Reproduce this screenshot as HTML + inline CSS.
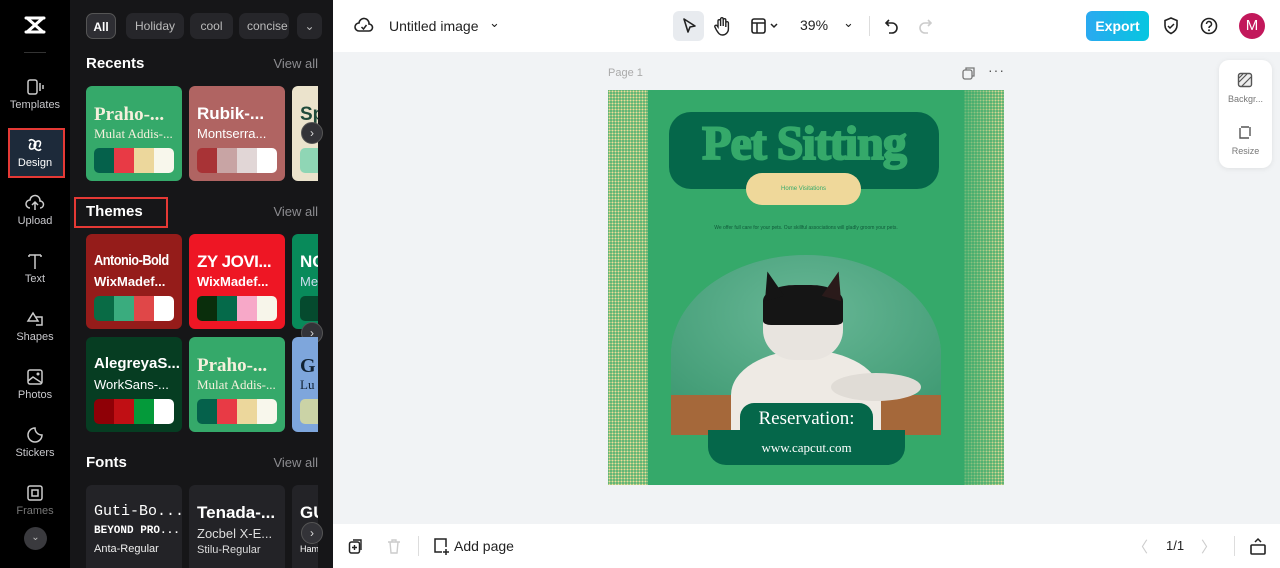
<!DOCTYPE html>
<html><head><meta charset="utf-8"><style>
*{margin:0;padding:0;box-sizing:border-box}
body{width:1280px;height:568px;overflow:hidden;font-family:"Liberation Sans",sans-serif;background:#000;position:relative}
.abs{position:absolute}
.rail{left:0;top:0;width:70px;height:568px;background:#000}
.ri{position:absolute;left:0;width:70px;text-align:center;color:#c8c8cc;font-size:11px}
.ri svg{display:block;margin:0 auto 3px}
.panel{left:70px;top:0;width:263px;height:568px;background:#161618;overflow:hidden}
.chip{position:absolute;top:13px;height:26px;border-radius:7px;background:#26262a;color:#bbb;font-size:12px;line-height:26px;text-align:center;overflow:hidden}
.h{position:absolute;left:16px;color:#fff;font-weight:bold;font-size:15px}
.va{position:absolute;right:15px;color:#8c8c90;font-size:13px}
.card{position:absolute;width:96px;height:95px;border-radius:6px;overflow:hidden}
.card.p{width:26px;border-radius:6px 0 0 6px}
.card .t{position:absolute;left:8px;top:18px;font-weight:bold;font-size:17px;white-space:nowrap}
.card .s{position:absolute;left:8px;top:40px;font-size:13px;white-space:nowrap}
.pal{position:absolute;left:8px;top:62px;width:80px;height:25px;border-radius:5px;overflow:hidden;display:flex}
.pal i{flex:1}
.nx{position:absolute;width:22px;height:22px;border-radius:50%;background:#333338;border:1px solid #555;color:#ddd;font-size:12px;line-height:20px;text-align:center}
.main{left:333px;top:0;width:947px;height:568px;background:#f1f3f5}
.top{left:0;top:0;width:947px;height:52px;background:#fff}
.bot{left:0;top:524px;width:947px;height:44px;background:#fff}
.ic{position:absolute}
.dots{position:absolute;top:0;width:40px;height:395px;background-image:radial-gradient(circle,#f0dc98 0 1.1px,transparent 1.3px);background-size:3px 3px}
</style></head><body>
<div class="abs rail">
 <div class="ri" style="top:14px"><svg width="26" height="22" viewBox="0 0 26 22"><path d="M4 4h18M4 18h18M5 4 L21 18 M21 4 L5 18" stroke="#fff" stroke-width="3" fill="none" stroke-linecap="round"/></svg></div>
 <div class="abs" style="left:24px;top:52px;width:22px;height:1px;background:#333"></div>
 <div class="ri" style="top:78px"><svg width="20" height="18"><rect x="3" y="2" width="9" height="14" rx="2" fill="none" stroke="#ccc" stroke-width="1.5"/><path d="M15 5v8M18 7v4" stroke="#ccc" stroke-width="1.5"/></svg>Templates</div>
 <div class="abs" style="left:8px;top:128px;width:57px;height:50px;border:2px solid #e53935;background:#1d2a3a"></div>
 <div class="ri" style="top:136px;color:#fff"><svg width="20" height="18"><path d="M4 5c3-4 9 2 6 6s-8 2-4-4M16 13c-3 4-9-2-6-6s8-2 4 4" stroke="#fff" stroke-width="1.6" fill="none"/></svg>Design</div>
 <div class="ri" style="top:194px"><svg width="20" height="18"><path d="M5 14a4 4 0 0 1 0-8 5 5 0 0 1 10 1 3.5 3.5 0 0 1 0 7M10 9v7M7 11l3-3 3 3" stroke="#ccc" stroke-width="1.5" fill="none"/></svg>Upload</div>
 <div class="ri" style="top:252px"><svg width="20" height="18"><path d="M4 3h12M10 3v14M4 3v2M16 3v2" stroke="#ccc" stroke-width="1.5" fill="none"/></svg>Text</div>
 <div class="ri" style="top:310px"><svg width="20" height="18"><path d="M8 3l5 8H3zM11 7h6v8h-6" stroke="#ccc" stroke-width="1.5" fill="none"/></svg>Shapes</div>
 <div class="ri" style="top:368px"><svg width="20" height="18"><rect x="3" y="2" width="14" height="14" rx="2" fill="none" stroke="#ccc" stroke-width="1.5"/><path d="M3 13l5-4 9 6" stroke="#ccc" stroke-width="1.5" fill="none"/><circle cx="13" cy="6" r="1.5" fill="#ccc"/></svg>Photos</div>
 <div class="ri" style="top:426px"><svg width="20" height="18"><path d="M17 9a7 7 0 1 1-7-7c0 4 3 7 7 7z" stroke="#ccc" stroke-width="1.5" fill="none"/></svg>Stickers</div>
 <div class="ri" style="top:484px;color:#777"><svg width="20" height="18"><rect x="3" y="2" width="14" height="14" rx="2" fill="none" stroke="#ccc" stroke-width="1.5"/><rect x="7" y="6" width="6" height="6" fill="none" stroke="#ccc" stroke-width="1.5"/></svg>Frames</div>
 <div class="abs" style="left:24px;top:527px;width:23px;height:23px;border-radius:50%;background:#3a3a3e;color:#bbb;font-size:10px;text-align:center;line-height:22px">⌄</div>
</div>
<div class="abs panel">
 <div class="chip" style="left:16px;width:30px;background:#2e2e33;border:1px solid #555;color:#fff;font-weight:bold">All</div>
 <div class="chip" style="left:56px;width:58px">Holiday</div>
 <div class="chip" style="left:120px;width:43px">cool</div>
 <div class="chip" style="left:169px;width:50px;text-align:left;padding-left:8px">concise</div>
 <div class="chip" style="left:227px;width:25px">⌄</div>
 <div class="h" style="top:55px">Recents</div><div class="va" style="top:56px">View all</div>
 <div class="card" style="left:16px;top:86px;background:#35a96a"><div class="t" style="color:#f5f0dc;font-family:'Liberation Serif',serif;font-size:19px">Praho-...</div><div class="s" style="color:#f5f0dc;font-family:'Liberation Serif',serif">Mulat Addis-...</div><div class="pal"><i style="background:#05614b"></i><i style="background:#e83a45"></i><i style="background:#ecd79c"></i><i style="background:#f8f7ec"></i></div></div>
 <div class="card" style="left:119px;top:86px;background:#b06462"><div class="t" style="color:#fff">Rubik-...</div><div class="s" style="color:#fff">Montserra...</div><div class="pal"><i style="background:#a83336"></i><i style="background:#c8a4a4"></i><i style="background:#e1d6d6"></i><i style="background:#fff"></i></div></div>
 <div class="card p" style="left:222px;top:86px;background:#ebe3cc"><div class="t" style="color:#1e4a3a;font-size:19px">Sp</div><div class="pal"><i style="background:#8fd6b5"></i></div></div>
 <div class="nx" style="left:231px;top:122px">›</div>
 <div class="abs" style="left:4px;top:197px;width:94px;height:31px;border:2px solid #e53935"></div>
 <div class="h" style="top:203px">Themes</div><div class="va" style="top:204px">View all</div>
 <div class="card" style="left:16px;top:234px;background:#951c1a"><div class="t" style="color:#fff;font-size:15px;letter-spacing:-.6px;transform:scaleX(.85);transform-origin:left">Antonio-Bold</div><div class="s" style="color:#fff;font-weight:bold">WixMadef...</div><div class="pal"><i style="background:#096b45"></i><i style="background:#3aac7e"></i><i style="background:#e04748"></i><i style="background:#fff"></i></div></div>
 <div class="card" style="left:119px;top:234px;background:#ee1624"><div class="t" style="color:#fff;font-size:17px;letter-spacing:-.5px">ZY JOVI...</div><div class="s" style="color:#fff;font-weight:bold">WixMadef...</div><div class="pal"><i style="background:#0a2e0c"></i><i style="background:#056a4a"></i><i style="background:#f7a8c8"></i><i style="background:#f7f5ea"></i></div></div>
 <div class="card p" style="left:222px;top:234px;background:#088a5a"><div class="t" style="color:#fff">NC</div><div class="s" style="color:#cde">Me</div><div class="pal"><i style="background:#054a2e"></i></div></div>
 <div class="nx" style="left:231px;top:322px">›</div>
 <div class="card" style="left:16px;top:337px;background:#063d22"><div class="t" style="color:#fff;font-size:15px">AlegreyaS...</div><div class="s" style="color:#fff">WorkSans-...</div><div class="pal"><i style="background:#8f0006"></i><i style="background:#c00f14"></i><i style="background:#049a3a"></i><i style="background:#fff"></i></div></div>
 <div class="card" style="left:119px;top:337px;background:#35a96a"><div class="t" style="color:#f5f0dc;font-family:'Liberation Serif',serif;font-size:19px">Praho-...</div><div class="s" style="color:#f5f0dc;font-family:'Liberation Serif',serif">Mulat Addis-...</div><div class="pal"><i style="background:#05614b"></i><i style="background:#e83a45"></i><i style="background:#ecd79c"></i><i style="background:#f8f7ec"></i></div></div>
 <div class="card p" style="left:222px;top:337px;background:#7ea6dc"><div class="t" style="color:#123;font-family:'Liberation Serif',serif;font-size:20px">G</div><div class="s" style="color:#123;font-family:'Liberation Serif',serif">Lu</div><div class="pal"><i style="background:#cbd3a6"></i></div></div>
 <div class="h" style="top:454px">Fonts</div><div class="va" style="top:455px">View all</div>
 <div class="card" style="left:16px;top:485px;height:90px;background:#232327"><div class="t" style="color:#fff;font-family:'Liberation Mono',monospace;font-size:15px;font-weight:normal">Guti-Bo...</div><div class="s" style="top:40px;color:#fff;font-family:'Liberation Mono',monospace;font-weight:bold;font-size:11px">BEYOND PRO...</div><div class="s" style="top:58px;color:#eee;font-size:11px">Anta-Regular</div></div>
 <div class="card" style="left:119px;top:485px;height:90px;background:#232327"><div class="t" style="color:#fff;font-size:17px">Tenada-...</div><div class="s" style="top:41px;color:#ddd">Zocbel X-E...</div><div class="s" style="top:59px;color:#ddd;font-size:11px">Stilu-Regular</div></div>
 <div class="card p" style="left:222px;top:485px;height:90px;background:#232327"><div class="t" style="color:#fff">GU</div><div class="s" style="top:59px;color:#fff;font-size:9px">Ham</div></div>
 <div class="nx" style="left:231px;top:522px">›</div>
</div>
<div class="abs" style="left:333px;top:260px;width:8px;height:50px;background:#2a2a2e;border-radius:0 5px 5px 0;color:#888;font-size:9px;line-height:50px">‹</div>
<div class="abs main">
 <div class="abs top">
  <svg class="ic" style="left:21px;top:16px" width="20" height="20"><path d="M5 15a4 4 0 0 1 0-8 5 5 0 0 1 10 1 3.5 3.5 0 0 1 0 7z" stroke="#222" stroke-width="1.6" fill="none"/><path d="M7.5 11l2 2 3-4" stroke="#222" stroke-width="1.5" fill="none"/></svg>
  <div class="abs" style="left:56px;top:18px;font-size:14px;color:#222">Untitled image</div>
  <div class="abs" style="left:156px;top:15px;font-size:13px;color:#222">⌄</div>
  <div class="abs" style="left:340px;top:11px;width:31px;height:30px;border-radius:6px;background:#e8ebef"></div>
  <svg class="ic" style="left:347px;top:17px" width="18" height="18"><path d="M4 2l11 7-5 1-2 5z" stroke="#222" stroke-width="1.6" fill="none" stroke-linejoin="round"/></svg>
  <svg class="ic" style="left:380px;top:16px" width="18" height="20"><path d="M5 11V5a1.3 1.3 0 0 1 2.6 0v5V3a1.3 1.3 0 0 1 2.6 0v7V4a1.3 1.3 0 0 1 2.6 0v7V7a1.3 1.3 0 0 1 2.6 0v6a6 6 0 0 1-6 6c-3 0-4-2-6-5l-1.5-3a1.3 1.3 0 0 1 2-1.5z" stroke="#222" stroke-width="1.4" fill="none"/></svg>
  <svg class="ic" style="left:417px;top:17px" width="30" height="18"><rect x="2" y="2" width="13" height="14" rx="2" stroke="#222" stroke-width="1.6" fill="none"/><path d="M2 6h13M7 6v10M21 7l3 3 3-3" stroke="#222" stroke-width="1.5" fill="none"/></svg>
  <div class="abs" style="left:467px;top:17px;font-size:14px;color:#222">39%</div>
  <div class="abs" style="left:510px;top:15px;font-size:13px;color:#222">⌄</div>
  <div class="abs" style="left:536px;top:16px;width:1px;height:20px;background:#ddd"></div>
  <svg class="ic" style="left:550px;top:16px" width="18" height="20"><path d="M6 4L3 7l3 3M3 7h6a5 5 0 0 1 0 10H6" stroke="#222" stroke-width="1.6" fill="none"/></svg>
  <svg class="ic" style="left:583px;top:16px" width="18" height="20"><path d="M12 4l3 3-3 3M15 7H9a5 5 0 0 0 0 10h3" stroke="#ccc" stroke-width="1.6" fill="none"/></svg>
  <div class="abs" style="left:753px;top:11px;width:63px;height:30px;border-radius:6px;background:linear-gradient(90deg,#2aa9f0,#06c6e0);color:#fff;font-weight:bold;font-size:14px;text-align:center;line-height:30px">Export</div>
  <svg class="ic" style="left:829px;top:16px" width="18" height="20"><path d="M9 2l6 2.5v5c0 4-3 6.5-6 8-3-1.5-6-4-6-8v-5z" stroke="#222" stroke-width="1.6" fill="none"/><path d="M6 10l2 2 4-4" stroke="#222" stroke-width="1.5" fill="none"/></svg>
  <svg class="ic" style="left:866px;top:16px" width="20" height="20"><circle cx="10" cy="10" r="7.5" stroke="#222" stroke-width="1.6" fill="none"/><path d="M7.5 8a2.5 2.5 0 1 1 3.5 2.3c-.8.4-1 1-1 1.7" stroke="#222" stroke-width="1.5" fill="none"/><circle cx="10" cy="14.3" r="1" fill="#222"/></svg>
  <div class="abs" style="left:906px;top:13px;width:26px;height:26px;border-radius:50%;background:#c2185b;color:#fff;font-size:15px;text-align:center;line-height:26px">M</div>
 </div>
 <div class="abs" style="left:275px;top:67px;font-size:11px;color:#aaa">Page 1</div>
 <svg class="ic" style="left:629px;top:66px" width="14" height="14"><rect x="1" y="4" width="9" height="9" rx="2" stroke="#777" stroke-width="1.3" fill="none"/><path d="M4 4V2h8v8h-2" stroke="#777" stroke-width="1.3" fill="none"/></svg>
 <div class="abs" style="left:655px;top:62px;font-size:14px;color:#555;letter-spacing:1px">···</div>
 <!-- design -->
 <div class="abs" style="left:275px;top:90px;width:396px;height:395px;background:#35a96a;overflow:hidden">
  <div class="dots" style="left:0"></div>
  <div class="dots" style="right:0;-webkit-mask-image:linear-gradient(90deg,rgba(0,0,0,.3),#000)"></div>
  <div class="abs" style="left:61px;top:22px;width:270px;height:77px;border-radius:22px;background:#05674a"></div>
  <div class="abs" style="left:61px;top:26px;width:270px;text-align:center;font-family:'Liberation Serif',serif;font-weight:bold;font-size:48px;color:#35a96a;letter-spacing:-1px;-webkit-text-stroke:2px #35a96a">Pet Sitting</div>
  <div class="abs" style="left:138px;top:83px;width:115px;height:32px;border-radius:16px;background:#efd89a;text-align:center;line-height:32px;font-size:6px;color:#35a96a">Home Visitations</div>
  <div class="abs" style="left:0;top:135px;width:396px;text-align:center;font-size:5px;color:#0f5a3a">We offer full care for your pets. Our skillful associations will gladly groom your pets.</div>
  <div class="abs" style="left:63px;top:165px;width:270px;height:180px;border-radius:135px 135px 0 0/100px 100px 0 0;overflow:hidden;background:#4fa580">
   <div class="abs" style="left:0;top:0;width:270px;height:145px;background:radial-gradient(ellipse at 50% 40%,#68b796,#3f9a73)"></div>
   <div class="abs" style="left:0;top:140px;width:270px;height:40px;background:#a5683a"></div>
   <div class="abs" style="left:60px;top:95px;width:150px;height:90px;border-radius:50% 50% 10% 10%;background:#eeeae4"></div>
   <div class="abs" style="left:92px;top:30px;width:80px;height:75px;border-radius:40%;background:#e8e4df"></div>
   <div class="abs" style="left:92px;top:30px;width:80px;height:40px;border-radius:40% 40% 10% 10%;background:#151515"></div>
   <div class="abs" style="left:90px;top:16px;width:0;height:0;border-left:10px solid transparent;border-right:10px solid transparent;border-bottom:28px solid #151515;transform:rotate(-15deg)"></div>
   <div class="abs" style="left:154px;top:16px;width:0;height:0;border-left:10px solid transparent;border-right:10px solid transparent;border-bottom:28px solid #2a1a1a;transform:rotate(15deg)"></div>
   <div class="abs" style="left:160px;top:118px;width:90px;height:28px;border-radius:50%;background:#e0dcd6"></div>
  </div>
  <div class="abs" style="left:132px;top:313px;width:133px;height:40px;border-radius:14px 14px 0 0;background:#05674a"></div>
  <div class="abs" style="left:100px;top:340px;width:197px;height:35px;border-radius:0 0 18px 18px;background:#05674a"></div>
  <div class="abs" style="left:100px;top:318px;width:197px;text-align:center;font-family:'Liberation Serif',serif;font-size:19px;color:#fff">Reservation:</div>
  <div class="abs" style="left:100px;top:350px;width:197px;text-align:center;font-family:'Liberation Serif',serif;font-size:13px;color:#fff">www.capcut.com</div>
 </div>
 <div class="abs" style="left:886px;top:60px;width:53px;height:108px;border-radius:10px;background:#fff;box-shadow:0 1px 6px rgba(0,0,0,.08)"></div>
 <svg class="ic" style="left:904px;top:72px" width="16" height="16"><rect x="1.5" y="1.5" width="13" height="13" rx="2" stroke="#555" stroke-width="1.4" fill="#eee"/><path d="M2 10l8-8M5 14l9-9M2 6l4-4" stroke="#555" stroke-width="1.2"/></svg>
 <div class="abs" style="left:886px;top:94px;width:53px;text-align:center;font-size:9px;color:#777">Backgr...</div>
 <svg class="ic" style="left:904px;top:124px" width="16" height="16"><path d="M3 4v10h9M4 3h8M13 3v9" stroke="#555" stroke-width="1.4" fill="none"/></svg>
 <div class="abs" style="left:886px;top:146px;width:53px;text-align:center;font-size:9px;color:#777">Resize</div>
 <div class="abs bot">
  <svg class="ic" style="left:15px;top:14px" width="16" height="18"><rect x="1.5" y="4" width="10" height="11" rx="2" stroke="#222" stroke-width="1.5" fill="none"/><path d="M5 2h8v10M6.5 7v5M4 9.5h5" stroke="#222" stroke-width="1.4" fill="none"/></svg>
  <svg class="ic" style="left:53px;top:14px" width="16" height="18"><path d="M2 4h12M6 4V2h4v2M4 4l1 11h6l1-11" stroke="#ccc" stroke-width="1.4" fill="none"/></svg>
  <div class="abs" style="left:85px;top:12px;width:1px;height:20px;background:#ddd"></div>
  <svg class="ic" style="left:99px;top:13px" width="18" height="18"><path d="M10 15H3V2h11v8M14 12v6M11 15h6" stroke="#222" stroke-width="1.5" fill="none"/></svg>
  <div class="abs" style="left:121px;top:14px;font-size:14px;color:#222">Add page</div>
  <div class="abs" style="left:800px;top:12px;font-size:15px;color:#ccc">〈</div>
  <div class="abs" style="left:833px;top:14px;font-size:13px;color:#222">1/1</div>
  <div class="abs" style="left:868px;top:12px;font-size:15px;color:#ccc">〉</div>
  <div class="abs" style="left:901px;top:12px;width:1px;height:20px;background:#ddd"></div>
  <svg class="ic" style="left:916px;top:12px" width="18" height="20"><rect x="2" y="9" width="14" height="9" rx="1" stroke="#222" stroke-width="1.6" fill="none"/><path d="M6 6l3-3 3 3" stroke="#222" stroke-width="1.5" fill="none"/></svg>
 </div>
</div>
</body></html>
